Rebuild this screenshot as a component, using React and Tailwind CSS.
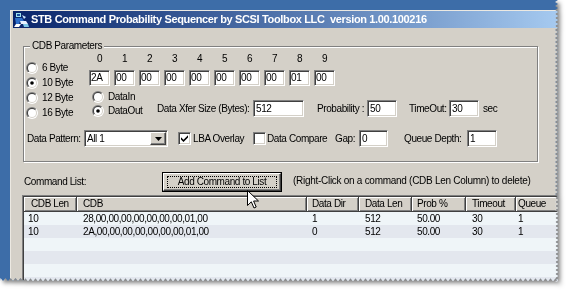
import React, { useId } from 'react';

const sunken =
  'border border-t-[#808080] border-l-[#808080] border-b-white border-r-white shadow-[inset_1px_1px_0_#404040,inset_-1px_-1px_0_#d4d0c8] bg-white';
const raised =
  'border border-t-white border-l-white border-b-[#404040] border-r-[#404040] shadow-[inset_-1px_-1px_0_#808080] bg-[#d4d0c8]';

function Radio({ checked }) {
  const id = useId().replace(/:/g, '');
  return (
    <svg width="12" height="12" viewBox="0 0 12 12" className="shrink-0">
      <defs>
        <linearGradient id={`ro${id}`} x1="0" y1="0" x2="1" y2="1">
          <stop offset="0.5" stopColor="#808080" />
          <stop offset="0.5" stopColor="#ffffff" />
        </linearGradient>
        <linearGradient id={`ri${id}`} x1="0" y1="0" x2="1" y2="1">
          <stop offset="0.5" stopColor="#404040" />
          <stop offset="0.5" stopColor="#d4d0c8" />
        </linearGradient>
      </defs>
      <circle cx="6" cy="6" r="6" fill={`url(#ro${id})`} />
      <circle cx="6" cy="6" r="5" fill={`url(#ri${id})`} />
      <circle cx="6" cy="6" r="4" fill="#fff" />
      {checked && <circle cx="6" cy="6" r="1.8" fill="#000" />}
    </svg>
  );
}

function RadioRow({ checked, label, labelW = '' }) {
  return (
    <div className="flex items-center">
      <Radio checked={checked} />
      <span className={`ml-[4px] whitespace-nowrap ${labelW}`}>{label}</span>
    </div>
  );
}

function Check({ checked }) {
  return (
    <div className={`w-[13px] h-[13px] shrink-0 flex items-center justify-center ${sunken}`}>
      {checked && (
        <svg width="7" height="7" viewBox="0 0 7 7">
          <path d="M0 2.2 L2.5 4.7 L7 0.2 L7 2.4 L2.5 6.9 L0 4.4 Z" fill="#000" />
        </svg>
      )}
    </div>
  );
}

function Field({ value, w, pad = 'pl-[2px]', h = 'h-[17px]' }) {
  return (
    <div className={`${w} ${h} shrink-0 flex items-center ${pad} ${sunken}`}>
      <span className="whitespace-nowrap">{value}</span>
    </div>
  );
}

function TitleIcon() {
  return (
    <svg width="16" height="16" viewBox="0 0 16 16" className="shrink-0">
      <rect x="2" y="1" width="5" height="4" fill="#9fe3f0" />
      <rect x="3" y="2" width="3" height="2" fill="#1d4ea0" />
      <path d="M1 6 L8 6 L10 9 L6 9 L5 12 L2 12 Z" fill="#2f6fc9" />
      <path d="M6 9 L12 9 L14 12 L7 12 Z" fill="#e9f2ff" />
      <path d="M2 12 L7 12 L5 15 L0 15 Z" fill="#ffffff" />
      <path d="M9 12 L14 12 L15 15 L10 15 Z" fill="#7fc8e8" />
      <path d="M8 3 L12 5 L10 7 Z" fill="#cfe9ff" />
    </svg>
  );
}

const cols = [
  { name: 'CDB Len', w: 'w-[53px]', hp: 'pl-[7px]', rp: 'pl-[4px]' },
  { name: 'CDB', w: 'w-[230px]', hp: 'pl-[6px]', rp: 'pl-[6px]' },
  { name: 'Data Dir', w: 'w-[52px]', hp: 'pl-[5px]', rp: 'pl-[5px]' },
  { name: 'Data Len', w: 'w-[53px]', hp: 'pl-[6px]', rp: 'pl-[6px]' },
  { name: 'Prob %', w: 'w-[54px]', hp: 'pl-[5px]', rp: 'pl-[5px]' },
  { name: 'Timeout', w: 'w-[50px]', hp: 'pl-[6px]', rp: 'pl-[6px]' },
  { name: 'Queue', w: 'w-[60px]', hp: 'pl-[2px]', rp: 'pl-[2px]' },
];

const rows = [
  ['10', '28,00,00,00,00,00,00,00,01,00', '1', '512', '50.00', '30', '1'],
  ['10', '2A,00,00,00,00,00,00,00,01,00', '0', '512', '50.00', '30', '1'],
  [],
  [],
  [],
  [],
];

const cdb = ['2A', '00', '00', '00', '00', '00', '00', '00', '01', '00'];

export default function App() {
  const W = 558;
  const H = 281;
  const pts = ['0px 0px'];
  for (let y = 0; y < H; y += 4) pts.push(`${W}px ${y}px`, `${W - 3}px ${y + 2}px`);
  pts.push(`${W}px ${H}px`);
  for (let x = W; x > 0; x -= 5) pts.push(`${x}px ${H}px`, `${x - 2.5}px ${H - 3}px`);
  pts.push(`0px ${H}px`);
  const clip = `polygon(${pts.join(',')})`;

  return (
    <div className="w-[575px] h-[290px] bg-white overflow-hidden text-[10px] tracking-[-0.4px] leading-none text-black font-['Liberation_Sans',Arial,sans-serif]">
      <div className="drop-shadow-[3px_3px_2px_rgba(0,0,0,0.5)]">
        <div className="relative w-[558px] h-[281px] bg-[#3d6da8] pt-[10px] pl-[10px]" style={{ clipPath: clip }}>
          <div className="w-[548px] h-[271px] bg-[#d4d0c8] border-l border-t border-[#ece9e2] pl-[2px]">
            {/* title bar */}
            <div className="w-[545px] h-[17px] flex items-center bg-gradient-to-r from-[#0a246a] to-[#a6caf0]">
              <div className="ml-[1px]">
                <TitleIcon />
              </div>
              <span className="ml-[1px] text-white font-bold text-[11px] whitespace-nowrap tracking-[-0.35px]">
                STB Command Probability Sequencer by SCSI Toolbox LLC&nbsp; version 1.00.100216
              </span>
            </div>

            {/* CDB Parameters group */}
            <div className="relative mt-[18px] ml-[10px] w-[515px] h-[116px] border border-[#808080] shadow-[inset_1px_1px_0_#fff,1px_1px_0_#fff]">
              <span className="absolute left-[6px] top-[-6px] px-[2px] bg-[#d4d0c8] whitespace-nowrap">CDB Parameters</span>

              <div className="flex h-[73px]">
                <div className="w-[65px] pl-[2px] pt-[13px] flex flex-col">
                  {['6 Byte', '10 Byte', '12 Byte', '16 Byte'].map((t) => (
                    <div key={t} className="h-[15px] flex items-center">
                      <RadioRow checked={t === '10 Byte'} label={t} />
                    </div>
                  ))}
                </div>

                <div className="flex flex-col pt-[5px]">
                  <div className="flex gap-[4px] h-[14px] items-center">
                    {cdb.map((_, i) => (
                      <span key={i} className="w-[21px] text-center">{i}</span>
                    ))}
                  </div>
                  <div className="flex gap-[4px] mt-[4px]">
                    {cdb.map((v, i) => (
                      <Field key={i} value={v} w="w-[21px]" h="h-[16px]" pad="pl-[1px]" />
                    ))}
                  </div>
                  <div className="h-[10px] flex items-start mt-[4px]">
                    <div className="h-[14px] flex items-center ml-[3px]">
                      <RadioRow checked={false} label="DataIn" />
                    </div>
                  </div>
                  <div className="h-[17px] flex items-center">
                    <div className="ml-[3px] pt-[5px]">
                      <RadioRow checked label="DataOut" labelW="w-[49px]" />
                    </div>
                    <span className="w-[96px] whitespace-nowrap">Data Xfer Size (Bytes):</span>
                    <Field value="512" w="w-[51px]" />
                    <span className="ml-[13px] w-[50px] whitespace-nowrap">Probability :</span>
                    <Field value="50" w="w-[30px]" />
                    <span className="ml-[12px] w-[40px] whitespace-nowrap">TimeOut:</span>
                    <Field value="30" w="w-[30px]" />
                    <span className="ml-[4px]">sec</span>
                  </div>
                </div>
              </div>

              <div className="mt-[9px] h-[19px] flex items-center pl-[3px]">
                <span className="w-[57px] whitespace-nowrap">Data Pattern:</span>
                <div className={`w-[84px] h-[17px] shrink-0 flex items-center ${sunken}`}>
                  <span className="flex-1 pl-[2px]">All 1</span>
                  <div className={`w-[16px] h-[13px] mr-[1px] flex items-center justify-center ${raised}`}>
                    <svg width="7" height="4" viewBox="0 0 7 4">
                      <path d="M0 0 H7 L3.5 4 Z" fill="#000" />
                    </svg>
                  </div>
                </div>
                <div className="ml-[10px]">
                  <Check checked />
                </div>
                <span className="ml-[2px] w-[60px] whitespace-nowrap">LBA Overlay</span>
                <Check checked={false} />
                <span className="ml-[1px] w-[68px] whitespace-nowrap">Data Compare</span>
                <span className="w-[24px]">Gap:</span>
                <Field value="0" w="w-[29px]" />
                <span className="ml-[16px] w-[63px] whitespace-nowrap">Queue Depth:</span>
                <Field value="1" w="w-[30px]" />
              </div>
            </div>

            {/* command list row */}
            <div className="mt-[10px] h-[20px] flex items-center">
              <span className="ml-[11px] w-[138px] whitespace-nowrap">Command List:</span>
              <div className="w-[120px] h-[20px] border border-black">
                <div className={`w-full h-full flex items-center justify-center ${raised}`}>
                  <div className="w-[110px] h-[12px] border border-dotted border-black flex items-center justify-center whitespace-nowrap">
                    Add Command to List
                  </div>
                </div>
              </div>
              <span className="ml-[11px] pb-[3px] whitespace-nowrap tracking-[-0.28px]">(Right-Click on a command (CDB Len Column) to delete)</span>
            </div>

            {/* list view */}
            <div className="mt-[3px] ml-[9px] w-[540px] h-[100px] border border-t-[#808080] border-l-[#808080] border-b-white border-r-white">
              <div className="w-full h-full border-t border-l border-[#404040] bg-[#eff5f8]">
                <div className="flex h-[15px]">
                  {cols.map((c) => (
                    <div
                      key={c.name}
                      className={`${c.w} shrink-0 h-full flex items-center ${c.hp} whitespace-nowrap bg-[#d4d0c8] border-r border-b border-[#404040] shadow-[inset_1px_1px_0_#fff,inset_-1px_-1px_0_#808080]`}
                    >
                      {c.name}
                    </div>
                  ))}
                </div>
                {rows.map((r, i) => (
                  <div key={i} className={`flex h-[13px] items-center ${i % 2 === 0 ? 'bg-[#eff5f8]' : 'bg-[#e3e7ee]'}`}>
                    {cols.map((c, j) => (
                      <div key={c.name} className={`${c.w} shrink-0 ${c.rp} whitespace-nowrap`}>
                        {r[j] || ''}
                      </div>
                    ))}
                  </div>
                ))}
              </div>
            </div>
          </div>

          {/* mouse cursor */}
          <svg className="absolute left-[247px] top-[190px]" width="12" height="19" viewBox="0 0 12 19">
            <path d="M0.5 0.5 L0.5 15.5 L4.3 11.8 L7 18 L9.2 17 L6.6 11 L11.5 11 Z" fill="#fff" stroke="#000" strokeWidth="1" strokeLinejoin="miter" />
          </svg>
        </div>
      </div>
    </div>
  );
}
